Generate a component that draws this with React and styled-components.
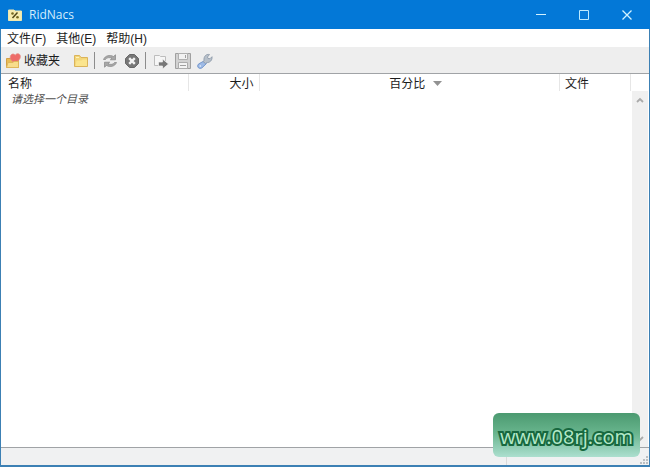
import React from "react";
import styled, { createGlobalStyle } from "styled-components";

const GlobalStyle = createGlobalStyle`
  *, *::before, *::after { box-sizing: border-box; }
  body {
    margin: 0;
    font: 12px/16px "Open Sans", "Noto Sans CJK SC", sans-serif;
    color: #1c1c1c;
    background: #ffffff;
  }
  button { font: inherit; color: inherit; background: none; border: 0; padding: 0; }
  svg { display: block; flex: none; }
`;

const Window = styled.div`
  position: relative;
  display: flex;
  flex-direction: column;
  min-height: 100vh;
  border: solid #3c80b4;
  border-width: 0 1px 2px;
`;

const TitleBar = styled.header`
  display: flex;
  align-items: center;
  height: 29px;
  margin: 0 -1px;
  padding: 0 2px 0 8px;
  background: #0378d7;
  color: #d3edfc;
`;

const Title = styled.h1`
  flex: 1;
  margin: 0 0 0 7px;
  font-size: 12px;
  font-weight: 400;
`;

const CaptionButton = styled.button`
  display: flex;
  align-items: center;
  justify-content: center;
  width: 43px;
  height: 29px;
`;

const MenuBar = styled.nav`
  display: flex;
  gap: 10px;
  height: 18px;
  padding-left: 6px;
`;

const MenuButton = styled.button`
  height: 18px;
  padding-top: 1px;
  line-height: 18px;
  font-family: "Liberation Sans", "Noto Sans CJK SC", sans-serif;
`;

const ToolBar = styled.div`
  display: flex;
  align-items: center;
  height: 26px;
  padding-left: 4px;
  background: #eeeeee;
`;

const ToolButton = styled.button`
  display: flex;
  align-items: center;
  justify-content: center;
  gap: 3px;
  min-width: 22px;
  height: 26px;
  padding-top: 2px;
`;

const Favorites = styled(ToolButton)`
  margin-right: 10px;
`;

const Separator = styled.span`
  width: 1px;
  height: 17px;
  margin: 0 4px 0 2px;
  background: #8c8c8c;
`;

const ListView = styled.main`
  display: flex;
  flex: 1;
  padding-right: 1px;
  border: solid #a0a3a6;
  border-width: 1px 0;
  background: #ffffff;
`;

const ListBody = styled.div`
  flex: 1;
  min-width: 0;
  padding-right: 1px;
`;

const Table = styled.table`
  width: 100%;
  table-layout: fixed;
  border-collapse: collapse;
`;

const HeadCell = styled.th`
  width: ${(p) => p.$width || "auto"};
  height: 17px;
  padding: 2px 5px 0 ${(p) => p.$indent || "5px"};
  border-right: 1px solid #e6e6e6;
  font-weight: 400;
  line-height: 15px;
  text-align: ${(p) => p.$align || "left"};
`;

const SortLabel = styled.span`
  display: inline-flex;
  align-items: center;
  gap: 8px;
`;

const HintCell = styled.td`
  padding: 0 10px;
  font-size: 11px;
  font-style: italic;
  color: #505050;
`;

const ScrollBar = styled.div`
  display: flex;
  flex-direction: column;
  justify-content: space-between;
  width: 16px;
  margin-top: 17px;
  background: #f0f0f0;
`;

const ScrollButton = styled.button`
  display: flex;
  align-items: center;
  justify-content: center;
  height: 17px;
`;

const StatusBar = styled.footer`
  display: flex;
  height: 17px;
  background: #f0f1f2;
`;

const StatusText = styled.div`
  flex: 1;
  border-right: 1px solid #dadada;
`;

const StatusEnd = styled.div`
  display: flex;
  align-items: flex-end;
  justify-content: flex-end;
  width: 142px;
  padding: 1px;
`;

const Badge = styled.a`
  position: absolute;
  right: 9px;
  bottom: 8px;
  width: 147px;
  height: 44px;
  border-radius: 6px;
  background: linear-gradient(#4b9a70, #68b48d 45%, #acdfcf);
  font: 500 20px/48px "Open Sans", sans-serif;
  text-align: center;
  text-decoration: none;
  color: #b4e8c8;
  -webkit-text-stroke: 4px #17683f;
  paint-order: stroke fill;
`;

const AppIcon = () => (
  <svg width="14" height="12" viewBox="0 0 14 12">
    <path d="M.5 1h5.500l1 1h6.500v9.500H.5z" fill="#f6edaf" stroke="#eee7b0" />
    <path d="M4.500 9l5-5.500" stroke="#514817" strokeWidth="1.5" />
    <circle cx="4.500" cy="4.500" r="1.300" fill="#756923" />
    <circle cx="9.500" cy="8.200" r="1.300" fill="#756923" />
  </svg>
);

const FavoritesIcon = () => (
  <svg width="16" height="16" viewBox="0 0 16 16">
    <path d="M1.500 5.500h5l1 1h6v8h-12z" fill="#e9bd56" stroke="#d3a044" />
    <path d="M10 9.500C6 8 4.500 5.500 5.500 3c.7-2.200 3.500-2.600 4.700-.8C11.500.2 14.500.3 15.200 2.500 16 5.500 13.500 8 10 9.500z" fill="#ee6c69" stroke="#e58d84" strokeWidth=".8" />
    <path d="M1.500 14.500l1.500-5H8l1-1h4.500v6z" fill="#f8dd8c" stroke="#dfb65c" />
  </svg>
);

const FolderIcon = () => (
  <svg width="16" height="14" viewBox="0 0 16 14">
    <path d="M1.500 1.500h5l1.500 2h6.500v9h-13z" fill="#f3d679" stroke="#dbb45b" />
    <path d="M2.500 12l1-5.500h5l1-1h4.500V12z" fill="#fbe58e" />
    <path d="M3 3.500h3" stroke="#fff3bd" />
  </svg>
);

const RefreshIcon = () => (
  <svg width="16" height="14" viewBox="0 0 16 14">
    <path d="M1.500 5.500C3 1.500 8 .5 11.500 2.500L13.500.8v5H8.300L10 4.300C7.500 3 4.500 3.500 3.500 5.500z" fill="#a7a7a7" stroke="#858585" strokeWidth=".7" />
    <path d="M14.500 8.500C13 12.500 8 13.500 4.500 11.500L2.500 13.200v-5H7.700L6 9.700c2.500 1.300 5.500.8 6.500-1.200z" fill="#a7a7a7" stroke="#858585" strokeWidth=".7" />
  </svg>
);

const StopIcon = () => (
  <svg width="14" height="14" viewBox="0 0 14 14">
    <path d="M4.500.5h5l4 4v5l-4 4h-5l-4-4v-5z" fill="#777777" stroke="#686868" />
    <path d="M4.200 4.200l5.600 5.600M9.800 4.200l-5.600 5.600" stroke="#f3f3f3" strokeWidth="2.400" />
  </svg>
);

const ExportIcon = () => (
  <svg width="16" height="16" viewBox="0 0 16 16">
    <path d="M1.500 2.500h5l1 1h5v9h-11z" fill="#f6f6f6" stroke="#bdbdbd" />
    <path d="M5.500 9h4V6l6 5-6 5v-3h-4z" fill="#777777" stroke="#f4f4f4" strokeWidth=".7" />
  </svg>
);

const SaveIcon = () => (
  <svg width="16" height="16" viewBox="0 0 16 16">
    <path d="M.5.5h15v15H.5z" fill="#d2d2d2" stroke="#a0a0a0" />
    <path d="M3.500.5h9v6h-9z" fill="#f2f2f2" stroke="#b0b0b0" />
    <path d="M3.500 9.500h9v6h-9z" fill="#f4f4f4" stroke="#adadad" />
    <path d="M10.500 2v3M5 12.500h6" stroke="#a0a0a0" />
  </svg>
);

const WrenchIcon = () => (
  <svg width="16" height="16" viewBox="0 0 16 16">
    <path d="M7 8L9.500 10.500 4.800 15Q2.500 16 1.200 14.500T1.500 11z" fill="#9ebae5" stroke="#7698cd" />
    <path d="M7 7.500C6.500 3.500 9 .8 12.500 1.500L10.500 4l.5 1.500 2 .2 2-2C15.500 7 13 10 9.500 9.500L8.500 10.500 6 8.500z" fill="#b7c0ca" stroke="#8996a6" strokeWidth=".8" />
    <circle cx="3.300" cy="13" r=".8" fill="#f1f6ff" />
  </svg>
);

const MinimizeIcon = () => (
  <svg width="10" height="10" viewBox="0 0 10 10"><path d="M0 4.500h10" stroke="#d3f2ff" /></svg>
);
const MaximizeIcon = () => (
  <svg width="10" height="10" viewBox="0 0 10 10"><path d="M.5.5h9v9h-9z" fill="none" stroke="#bdeaff" /></svg>
);
const CloseIcon = () => (
  <svg width="10" height="10" viewBox="0 0 10 10"><path d="M.5.500l9 9m0-9l-9 9" stroke="#d3f2ff" strokeWidth="1.300" /></svg>
);

const ScrollArrow = ({ down }) => (
  <svg width="8" height="6" viewBox="0 0 8 6">
    <path d={down ? "M1 1l3 3 3-3" : "M1 5l3-3 3 3"} fill="none" stroke="#aaaaaa" strokeWidth="1.800" />
  </svg>
);

const SortArrow = () => (
  <svg width="9" height="5" viewBox="0 0 9 5"><path d="M0 0h9L4.500 5z" fill="#929292" /></svg>
);

const GripIcon = () => (
  <svg width="8" height="8" viewBox="0 0 8 8">
    <path d="M6 0h2v2H6zM3 3h2v2H3zM6 3h2v2H6zM0 6h2v2H0zM3 6h2v2H3zM6 6h2v2H6z" fill="#bbbfc2" />
  </svg>
);

const menus = ["文件(F)", "其他(E)", "帮助(H)"];

export default function App() {
  return (
    <>
      <GlobalStyle />
      <Window>
        <TitleBar>
          <AppIcon />
          <Title>RidNacs</Title>
          <CaptionButton aria-label="最小化"><MinimizeIcon /></CaptionButton>
          <CaptionButton aria-label="最大化"><MaximizeIcon /></CaptionButton>
          <CaptionButton aria-label="关闭"><CloseIcon /></CaptionButton>
        </TitleBar>
        <MenuBar>
          {menus.map((label) => <MenuButton key={label}>{label}</MenuButton>)}
        </MenuBar>
        <ToolBar role="toolbar">
          <Favorites><FavoritesIcon />收藏夹</Favorites>
          <ToolButton aria-label="打开目录"><FolderIcon /></ToolButton>
          <Separator />
          <ToolButton aria-label="刷新"><RefreshIcon /></ToolButton>
          <ToolButton aria-label="停止"><StopIcon /></ToolButton>
          <Separator />
          <ToolButton aria-label="导出"><ExportIcon /></ToolButton>
          <ToolButton aria-label="保存"><SaveIcon /></ToolButton>
          <ToolButton aria-label="设置"><WrenchIcon /></ToolButton>
        </ToolBar>
        <ListView>
          <ListBody>
            <Table>
              <thead>
                <tr>
                  <HeadCell $width="187px" $indent="7px">名称</HeadCell>
                  <HeadCell $width="71px" $align="right">大小</HeadCell>
                  <HeadCell $align="center" $indent="18px">
                    <SortLabel>百分比<SortArrow /></SortLabel>
                  </HeadCell>
                  <HeadCell $width="71px">文件</HeadCell>
                </tr>
              </thead>
              <tbody>
                <tr><HintCell colSpan={4}>请选择一个目录</HintCell></tr>
              </tbody>
            </Table>
          </ListBody>
          <ScrollBar>
            <ScrollButton aria-label="向上滚动"><ScrollArrow /></ScrollButton>
            <ScrollButton aria-label="向下滚动"><ScrollArrow down /></ScrollButton>
          </ScrollBar>
        </ListView>
        <StatusBar>
          <StatusText />
          <StatusEnd><GripIcon /></StatusEnd>
        </StatusBar>
        <Badge href="#">www.08rj.com</Badge>
      </Window>
    </>
  );
}
